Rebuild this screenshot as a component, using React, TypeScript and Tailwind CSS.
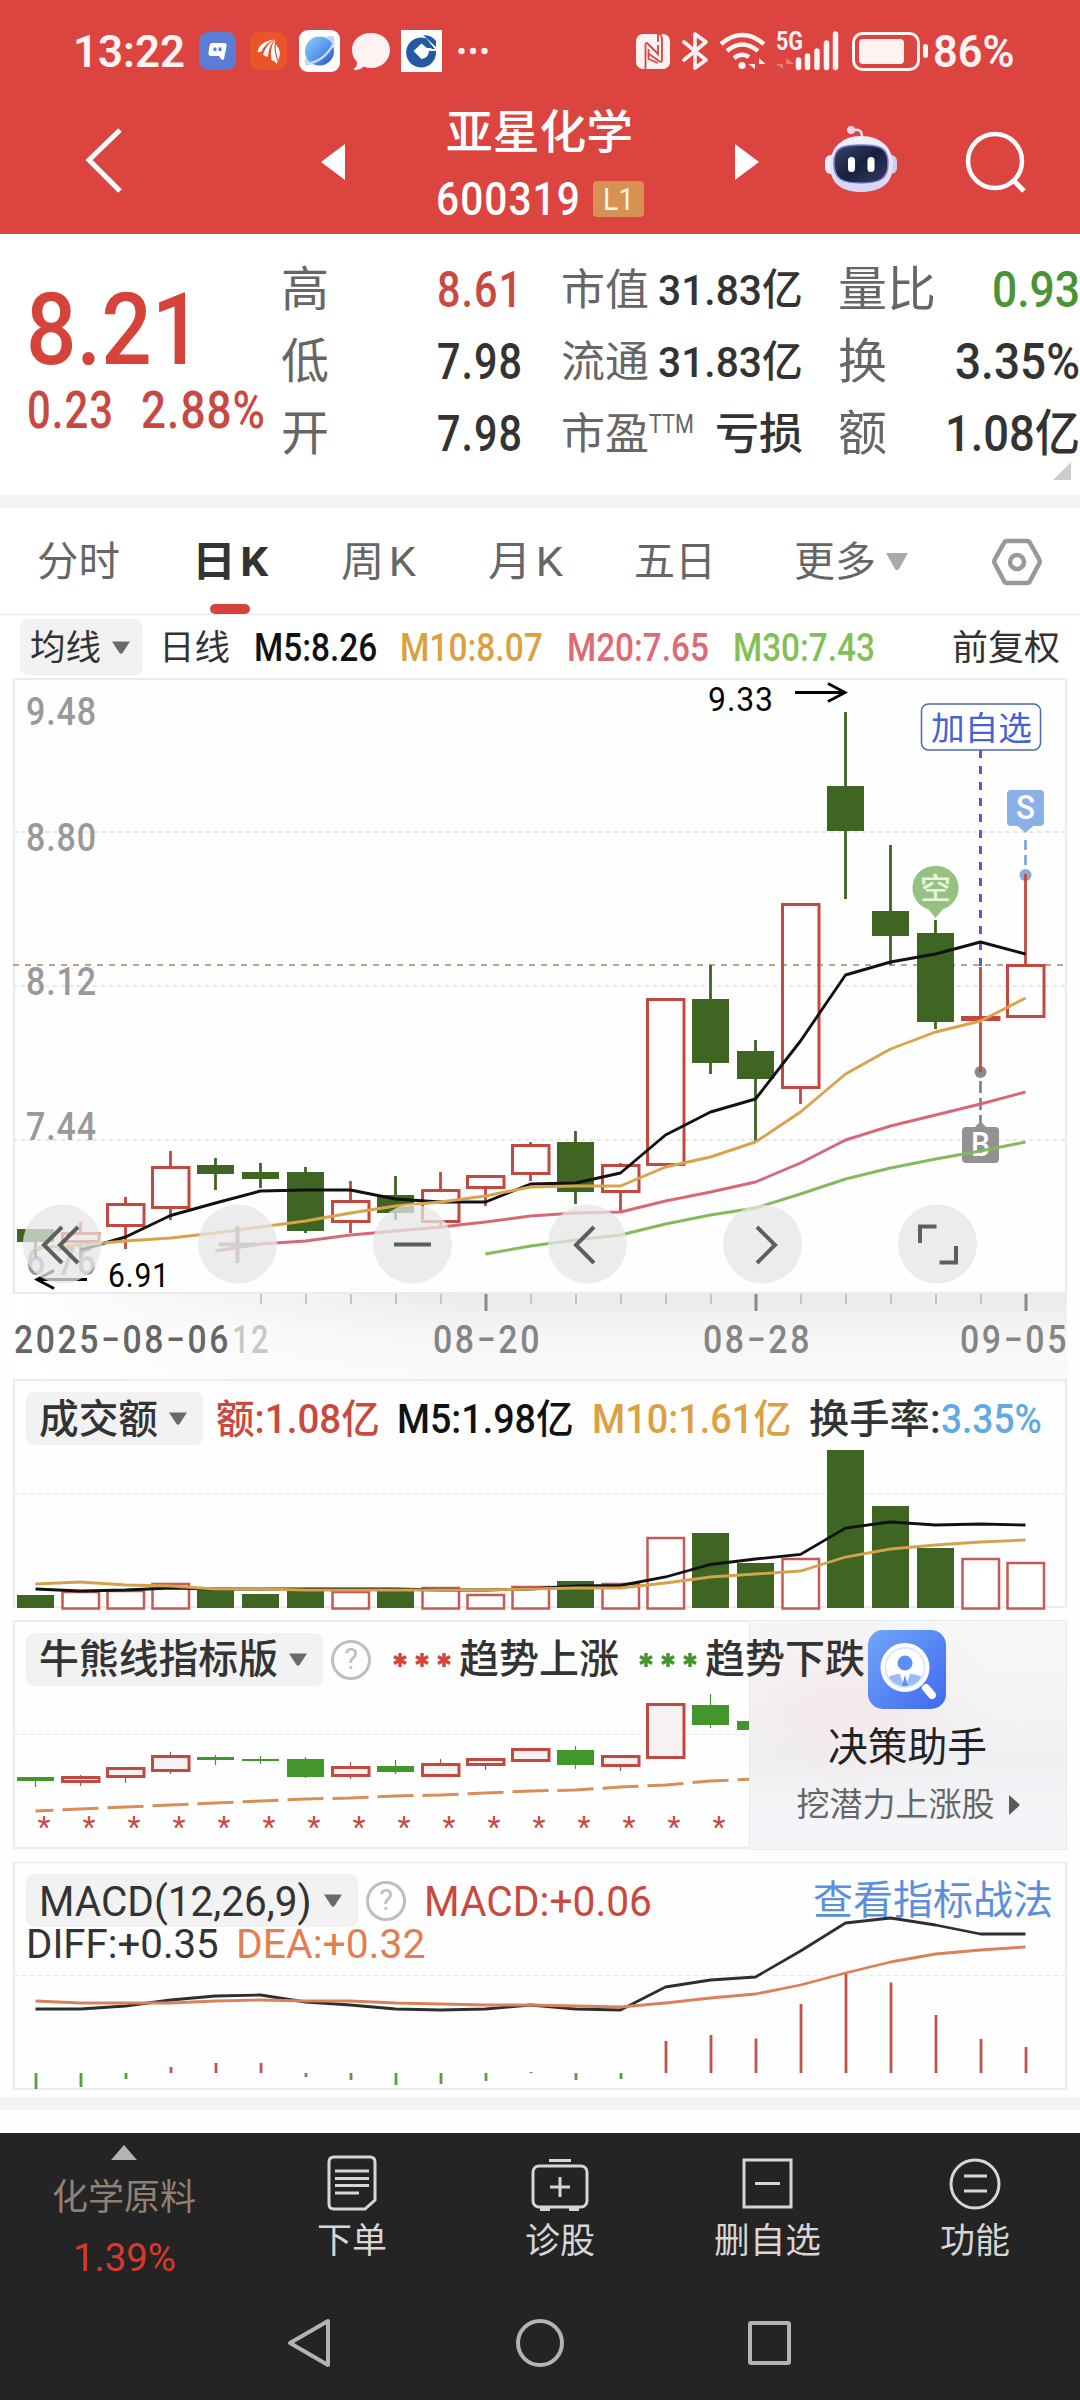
import { useLayoutEffect, useRef, type ReactNode } from "react";

const RED = "#c1493f";
const GREEN = "#3e6522";

// [body top, body bottom, high, low, rising]
type Candle = [number, number, number, number, boolean];

const candles: Candle[] = [
  [1229, 1242, 1229, 1258, false],
  [1232, 1243, 1222, 1258, true],
  [1203, 1227, 1197, 1249, true],
  [1166, 1209, 1151, 1220, true],
  [1165, 1174, 1158, 1190, false],
  [1172, 1179, 1163, 1188, false],
  [1172, 1231, 1167, 1233, false],
  [1200, 1223, 1181, 1233, true],
  [1195, 1213, 1176, 1220, false],
  [1189, 1223, 1172, 1229, true],
  [1175, 1189, 1175, 1206, true],
  [1144, 1175, 1142, 1181, true],
  [1142, 1192, 1131, 1204, false],
  [1164, 1193, 1163, 1212, true],
  [998, 1166, 998, 1166, true],
  [999, 1063, 965, 1074, false],
  [1051, 1079, 1040, 1141, false],
  [903, 1089, 903, 1104, true],
  [786, 831, 712, 899, false],
  [911, 936, 845, 965, false],
  [933, 1022, 920, 1029, false],
  [1016, 1021, 967, 1072, true],
  [964, 1018, 874, 1018, true],
];

const trend: Candle[] = [
  [1777, 1781, 1777, 1787, false],
  [1776, 1783, 1775, 1786, true],
  [1767, 1778, 1767, 1783, true],
  [1755, 1772, 1752, 1774, true],
  [1757, 1760, 1755, 1765, false],
  [1759, 1761, 1756, 1764, false],
  [1759, 1777, 1757, 1778, false],
  [1766, 1777, 1762, 1779, true],
  [1766, 1772, 1760, 1774, false],
  [1763, 1777, 1759, 1777, true],
  [1758, 1766, 1758, 1770, true],
  [1748, 1762, 1748, 1762, true],
  [1750, 1765, 1746, 1769, false],
  [1755, 1767, 1755, 1771, true],
  [1703, 1759, 1703, 1759, true],
  [1705, 1725, 1694, 1728, false],
  [1721, 1730, 1721, 1730, false],
];

const ma5 = [1250, 1237, 1215.5, 1203, 1191, 1190, 1190, 1199, 1202, 1202, 1184, 1183, 1173, 1135, 1112, 1099, 1041, 975, 962, 954, 942, 954];
const ma10 = [1248, 1245, 1241, 1238, 1233, 1227, 1221, 1213, 1206, 1202, 1196, 1187, 1186, 1186, 1167, 1157, 1142, 1112, 1074, 1049, 1032, 1021, 998];
const ma20 = [1251, 1244, 1241, 1235, 1231, 1227, 1222, 1216, 1213, 1212, 1201, 1192, 1182, 1163, 1140, 1126, 1115, 1104, 1092];
const ma30 = [1254, 1246, 1240, 1235, 1224, 1215, 1208, 1194, 1179, 1168, 1159, 1151, 1142];

const volumes = [1595, 1591, 1590, 1583, 1590, 1594, 1590, 1591, 1590, 1587, 1594, 1586, 1581, 1583, 1537, 1533, 1563, 1558, 1450, 1506, 1548, 1558, 1562];
const vol5 = [1589, 1591, 1590, 1588, 1589, 1589, 1589, 1589, 1589, 1590, 1590, 1589, 1586, 1585.5, 1577, 1564.5, 1559, 1554.5, 1528, 1522, 1525, 1524, 1525];
const vol10 = [1584, 1582, 1585, 1586, 1589, 1589, 1590, 1590, 1590, 1590, 1590, 1589, 1588, 1588, 1583, 1577, 1574, 1571, 1557, 1549, 1545, 1542, 1540];

const bull = [1811, 1809, 1807, 1805, 1803, 1801, 1799, 1798, 1796, 1795, 1793, 1791, 1790, 1787, 1785, 1781, 1779];

const diff = [2009, 2009, 2006, 2000, 1996, 1995, 2002, 2005, 2009, 2010, 2009, 2005, 2009, 2010, 1987, 1980, 1977, 1951, 1923, 1918, 1925, 1934, 1934];
const dea = [2001, 2003, 2003, 2003, 2001, 2000, 2001, 2001, 2003, 2004, 2005, 2005, 2006, 2007, 2003, 1998, 1994, 1985, 1973, 1962, 1954, 1950, 1947];
const macd = [2089, 2087, 2079, 2067, 2063, 2063, 2077, 2080, 2085, 2084, 2081, 2072, 2080, 2079, 2041, 2035, 2038.5, 2004, 1974, 1982.5, 2015, 2039, 2047];

const cx = (i: number) => 35.5 + i * 45;

const line = (values: number[], from = 0) =>
  values.map((y, i) => `${cx(i + from)},${y}`).join(" ");

// Squeezes or stretches one line of text to a given width
function Fit({ w, className = "", children }: { w: number; className?: string; children: ReactNode }) {
  const ref = useRef<HTMLSpanElement>(null);

  useLayoutEffect(() => {
    const el = ref.current;
    if (el) el.style.transform = `scaleX(${w / el.offsetWidth})`;
  }, [w]);

  return (
    <span className={`block shrink-0 leading-none ${className}`} style={{ width: w }}>
      <span ref={ref} className="inline-block origin-left whitespace-nowrap">
        {children}
      </span>
    </span>
  );
}

function Label({ x, y, w, size, fill, weight = 500, gap = 0, children }: {
  x: number; y: number; w: number; size: number; fill: string; weight?: number; gap?: number; children: string;
}) {
  return (
    <text x={x} y={y} textLength={w} lengthAdjust="spacingAndGlyphs" fontSize={size} fill={fill} fontWeight={weight} letterSpacing={gap}>
      {children}
    </text>
  );
}

function Frame({ top, bottom }: { top: number; bottom: number }) {
  return <rect x="14" y={top + 1} width="1052" height={bottom - top - 2} fill="none" stroke="#ebebeb" strokeWidth="2" />;
}

function GridLine({ y, w = 2 }: { y: number; w?: number }) {
  return <line x1="13" x2="1066" y1={y} y2={y} stroke="#e6e6e6" strokeWidth={w} strokeDasharray="4 4" />;
}

function Candles({ data, green, wick, fill = "none" }: { data: Candle[]; green: string; wick: number; fill?: string }) {
  return (
    <>
      {data.map(([top, bottom, high, low, up], i) => {
        const x = cx(i);
        const color = up ? RED : green;
        return (
          <g key={i} stroke={color} strokeWidth={wick}>
            {high < top && <line x1={x} x2={x} y1={high} y2={top} />}
            {low > bottom && <line x1={x} x2={x} y1={bottom} y2={low} />}
            {up ? (
              <rect x={x - 18} y={top + 1.5} width="36.5" height={bottom - top - 3} fill={fill} strokeWidth="3" />
            ) : (
              <rect x={x - 18.5} y={top} width="37" height={bottom - top} fill={green} stroke="none" />
            )}
          </g>
        );
      })}
    </>
  );
}

function Caret({ className = "" }: { className?: string }) {
  return (
    <svg width="18" height="13" viewBox="0 0 18 13" className={`shrink-0 ${className}`}>
      <path d="M0 0.500H18L10.500 12Q9 13.500 7.500 12Z" fill="#6a6a6a" />
    </svg>
  );
}

function Help({ className = "" }: { className?: string }) {
  return (
    <span className={`flex size-[40px] shrink-0 items-center justify-center rounded-full border-[3px] border-[#bfbfbf] text-[29px] leading-none text-[#bfbfbf] ${className}`}>
      ?
    </span>
  );
}

function StatusBar() {
  return (
    <div className="flex h-[102px] items-center text-[45px] font-semibold text-[#fff2f2]">
      <Fit w={112} className="ml-[73px]">13:22</Fit>
      <svg width="37" height="38" viewBox="0 0 37 38" className="ml-[14px]">
        <rect width="37" height="38" rx="9" fill="#5b7dd6" />
        <path d="M13 11H25Q28 11 27.5 14L26 22Q25.500 24 25 27Q24 29 22 27L20 24H12Q9 24 9.500 20L10.500 14Q11 11 13 11Z" fill="#fff" />
        <path d="M16 15.500V19M21 15.500V19" stroke="#5b7dd6" strokeWidth="3" />
      </svg>
      <svg width="37" height="38" viewBox="0 0 37 38" className="ml-[14px]">
        <rect width="37" height="38" rx="9" fill="#eb5428" />
        <path d="M7.500 20Q9 10 23.500 7.500Q14 12.500 11 20ZM13 22.500Q16 13 24.500 7.500Q18.500 14.500 18 24.500Q15 25 13 22.500ZM21.500 28Q19.500 16 25 7.500Q25 12 28.500 16Q32 22 26.500 32Q25.500 29 21.500 28Z" fill="#fff" />
        <path d="M25.500 9Q24 19 28 29" stroke="#eb5428" fill="none" strokeWidth="1.200" />
      </svg>
      <svg width="41" height="42" viewBox="0 0 41 42" className="ml-[12px]">
        <defs>
          <linearGradient id="globe" x1="0" y1="0" x2="1" y2="1">
            <stop offset="0" stopColor="#8bd2f5" />
            <stop offset="0.5" stopColor="#5b9cf0" />
            <stop offset="1" stopColor="#1f50cc" />
          </linearGradient>
        </defs>
        <rect width="41" height="42" rx="9" fill="#fff" />
        <path d="M6 35Q4 27 14 18L27 7Q38 3 35 12Q30 24 17 32Q9 37 6 35Z" fill="#c6d3f2" />
        <circle cx="20.500" cy="21" r="14.500" fill="url(#globe)" />
        <path d="M7 34Q25 32 35 13" fill="none" stroke="#c8dafa" strokeWidth="2.500" />
      </svg>
      <svg width="40" height="39" viewBox="0 0 40 39" className="ml-[11px]">
        <path d="M20 1C31 1 39 8 39 18S31 36 20 36Q16 36 13 34.500Q9 38 3 38Q2 37 5 35Q6 33 6 30Q1 25 1 18C1 8 9 1 20 1Z" fill="#fff2f2" />
      </svg>
      <svg width="41" height="42" viewBox="0 0 41 42" className="ml-[10px]">
        <rect width="41" height="42" fill="#fff" />
        <path d="M24 8A15 15 0 1 0 35 21H28A8 8 0 0 1 20.500 29L12.500 21L20.500 13.500L26 18H30Z" fill="#2559a3" />
        <path d="M22 5Q31 5 35 11V17ZM21 10L31 19H34L25 8Z" fill="#2559a3" />
        <path d="M20.500 14.500L27 21.500L20.500 28.500L13.500 21.500Z" fill="#fff" />
      </svg>
      <svg width="30" height="8" viewBox="0 0 30 8" className="ml-[16px]" fill="#fff2f2">
        <circle cx="3.500" cy="4" r="3.200" />
        <circle cx="15" cy="4" r="3.200" />
        <circle cx="26.500" cy="4" r="3.200" />
      </svg>

      <svg width="34" height="35" viewBox="0 0 34 35" className="ml-[148px]">
        <rect width="34" height="35" rx="7" fill="#fff2f2" />
        <path d="M9.500 35V11Q9.500 7.500 12 10L22 20V11M12.500 15V25L22 29" fill="none" stroke="#dc443f" strokeWidth="1.800" />
        <path d="M22 8V0H24.500L26 4V26Q26 29 23 27L13 20" fill="none" stroke="#dc443f" strokeWidth="1.800" />
      </svg>
      <svg width="26" height="38" viewBox="0 0 26 38" className="ml-[12px]" fill="none" stroke="#fff2f2" strokeWidth="3.600" strokeLinejoin="round" strokeLinecap="round">
        <path d="M2 10L24 28L13 36V2L24 10L2 28" />
      </svg>
      <svg width="48" height="39" viewBox="0 0 48 39" className="ml-[11px]" fill="none" stroke="#fff2f2" strokeWidth="4.500">
        <path d="M2 12Q23 -6 45 12M8 19Q23 6 39 19M15 26Q23 20 30 25" />
        <circle cx="23" cy="33.500" r="3.600" fill="#fff2f2" stroke="none" />
        <path d="M36 27V37L29.500 32H36ZM40 37V26L46.500 32H40Z" fill="#fff2f2" stroke="none" />
      </svg>
      <svg width="64" height="56" viewBox="0 -8 64 56" className="ml-[9px]">
        <text x="0" y="19" textLength="27" lengthAdjust="spacingAndGlyphs" fontSize="25" fontWeight="700" fill="#fff2f2">5G</text>
        <path d="M7 27V38L0 33H7ZM10 38V27L18 33H10Z" fill="#ee7a76" />
        <path d="M22.500 29V36.500M31.500 25V36.500M41 20V36.500M50.500 12V36.500M59.500 3V36.500" stroke="#fff2f2" strokeWidth="5.500" strokeLinecap="round" />
      </svg>
      <svg width="78" height="39" viewBox="0 0 78 39" className="ml-[12px]">
        <rect x="1.500" y="1.500" width="65" height="36" rx="9" fill="none" stroke="#fff2f2" strokeWidth="3" />
        <rect x="7" y="7" width="45" height="25" rx="4" fill="#fff2f2" />
        <rect x="71" y="12" width="5" height="14" rx="2.500" fill="#fff2f2" />
      </svg>
      <Fit w={82} className="ml-[3px]">86%</Fit>
    </div>
  );
}

function Robot() {
  return (
    <svg width="74" height="68" viewBox="825 125 74 68" className="mt-[23px] ml-[66px]">
      <defs>
        <linearGradient id="head" x1="0" y1="0" x2="0" y2="1">
          <stop offset="0" stopColor="#f6f0fb" />
          <stop offset="1" stopColor="#d3d6f3" />
        </linearGradient>
        <linearGradient id="visor" x1="0" y1="0" x2="1" y2="1">
          <stop offset="0" stopColor="#3a4766" />
          <stop offset="0.500" stopColor="#18203f" />
          <stop offset="1" stopColor="#363c63" />
        </linearGradient>
      </defs>
      <path d="M852 131Q862 127 862 137" fill="none" stroke="#f6dff0" strokeWidth="2.500" />
      <circle cx="851" cy="130" r="4" fill="#e9d5f0" />
      <rect x="825" y="155" width="12" height="19" rx="6" fill="#f3eefc" />
      <rect x="885" y="155" width="12" height="19" rx="6" fill="#c9cff2" />
      <path d="M861 136C882 136 893 149 893 165C893 183 881 192 861 192C841 192 830 183 830 165C830 149 841 136 861 136Z" fill="url(#head)" />
      <path d="M861 145C879 145 888 147 888 163C888 179 880 183 861 183C842 183 834 179 834 163C834 147 843 145 861 145Z" fill="url(#visor)" stroke="#7d77d8" strokeWidth="1.500" />
      <rect x="848" y="157" width="7" height="15" rx="3.500" fill="#fff" />
      <rect x="867.500" y="157" width="7" height="15" rx="3.500" fill="#fff" />
    </svg>
  );
}

function Header() {
  return (
    <header className="h-[234px] bg-[#dc443f] text-white">
      <StatusBar />
      <div className="flex items-start">
        <svg width="40" height="68" viewBox="0 0 40 68" className="mt-[24px] ml-[84px]">
          <path d="M36 4L5 34L36 65" fill="none" stroke="#fff" strokeWidth="5" />
        </svg>
        <svg width="24" height="36" viewBox="0 0 24 36" className="mt-[42px] ml-[197px]">
          <path d="M24 0V36L0 18Z" fill="#fff" />
        </svg>
        <div className="ml-[91px] flex w-[209px] flex-col">
          <Fit w={187} className="mt-[7px] ml-[10px] text-[46px] font-medium">亚星化学</Fit>
          <div className="mt-[21px] flex items-center">
            <Fit w={145} className="text-[46px] font-medium tracking-wide">600319</Fit>
            <span className="ml-[12px] flex h-[36px] w-[51px] items-center justify-center rounded bg-[#d79155] text-[32px] leading-none text-[#fff6e6]">
              <Fit w={31}>L1</Fit>
            </span>
          </div>
        </div>
        <svg width="24" height="36" viewBox="0 0 24 36" className="mt-[42px] ml-[90px]">
          <path d="M0 0V36L24 18Z" fill="#fff" />
        </svg>
        <Robot />
        <svg width="64" height="64" viewBox="0 0 64 64" className="mt-[29px] ml-[66px]" fill="none" stroke="#fff" strokeWidth="4.500">
          <circle cx="30" cy="30" r="27" />
          <path d="M48 49L59 60" strokeWidth="5" />
        </svg>
      </div>
    </header>
  );
}

const quoteRows = [
  { a: "高", av: "8.61", aw: 86, b: "市值", bv: "31.83亿", bw: 145, c: "量比", cv: "0.93", cw: 88 },
  { a: "低", av: "7.98", aw: 86, b: "流通", bv: "31.83亿", bw: 145, c: "换", cv: "3.35%", cw: 125 },
  { a: "开", av: "7.98", aw: 86, b: "市盈", bv: "亏损", bw: 88, c: "额", cv: "1.08亿", cw: 135 },
];

function Quote() {
  return (
    <section className="flex h-[261px] bg-white text-[#333]">
      <div className="w-[281px] shrink-0 pt-[46px] text-[#d5433a]">
        <Fit w={176} className="ml-[26px] text-[100px] font-medium">8.21</Fit>
        <div className="mt-[5px] flex text-[51px] text-[#c94840]">
          <Fit w={87} className="ml-[27px] font-medium tracking-wide">0.23</Fit>
          <Fit w={125} className="ml-[27px] font-medium tracking-wide">2.88%</Fit>
        </div>
      </div>
      <div className="relative grow pt-[20px]">
        {quoteRows.map((r, i) => (
          <div key={r.a} className="flex h-[72px] items-center">
            <Fit w={48} className="text-[48px] text-[#666]">{r.a}</Fit>
            <div className="flex w-[194px] justify-end text-[50px] font-medium tracking-wide">
              <Fit w={r.aw} className={i === 0 ? "text-[#c94840]" : ""}>{r.av}</Fit>
            </div>
            <Fit w={88} className="ml-[38px] text-[43px] text-[#666]">{r.b}</Fit>
            {i === 2 && <Fit w={45} className="-mt-[20px] text-[25px] text-[#666]">TTM</Fit>}
            <div className={i === 2 ? "flex w-[109px] justify-end text-[43px] font-medium" : "flex w-[154px] justify-end text-[43px] font-medium"}>
              <Fit w={r.bw}>{r.bv}</Fit>
            </div>
            <Fit w={r.c.length * 49} className="ml-[35px] text-[48px] text-[#666]">{r.c}</Fit>
            <div className="flex grow justify-end text-[50px] font-medium">
              <Fit w={r.cw} className={i === 0 ? "text-[#4a9434]" : ""}>{r.cv}</Fit>
            </div>
          </div>
        ))}
        <svg width="18" height="18" viewBox="0 0 18 18" className="absolute right-[9px] bottom-[15px]">
          <path d="M18 0V18H0Z" fill="#ccc" />
        </svg>
      </div>
    </section>
  );
}

function Tabs() {
  return (
    <nav className="flex h-[107px] items-start border-b border-[#e8e8e8] bg-white pt-[34px] text-[41px] text-[#666]">
      <Fit w={83} className="ml-[37px]">分时</Fit>
      <div className="ml-[72px] flex w-[76px] flex-col items-center font-bold text-[#333]">
        <Fit w={76}>日&#8202;K</Fit>
        <span className="mt-[21px] h-[10px] w-[40px] rounded-full bg-[#d5433a]" />
      </div>
      <Fit w={75} className="ml-[73px]">周&#8202;K</Fit>
      <Fit w={75} className="ml-[72px]">月&#8202;K</Fit>
      <Fit w={82} className="ml-[71px]">五日</Fit>
      <Fit w={82} className="ml-[78px]">更多</Fit>
      <svg width="22" height="18" viewBox="0 0 22 18" className="mt-[11px] ml-[10px]">
        <path d="M0 0H22L13 16Q11 18.500 9 16Z" fill="#aaa" />
      </svg>
      <svg width="50" height="48" viewBox="0 0 50 48" className="-mt-[4px] ml-[84px]" fill="none" stroke="#999" strokeWidth="4.500">
        <path d="M15 3H35Q37 3 38 5L47 21Q48.500 24 47 26L38 43Q37 45 35 45H15Q13 45 12 43L3 26Q1.500 24 3 21L12 5Q13 3 15 3Z" />
        <circle cx="25" cy="24" r="7" />
      </svg>
    </nav>
  );
}

function AverageBar() {
  return (
    <div className="flex h-[63px] items-center bg-white pt-[1px] text-[38px] font-medium">
      <div className="ml-[20px] flex h-[56px] w-[123px] items-center rounded-lg bg-[#f2f2f2] text-[#333]">
        <Fit w={71} className="mt-[2px] ml-[10px] text-[35px] font-normal">均线</Fit>
        <Caret className="ml-[11px]" />
      </div>
      <Fit w={71} className="mt-[3px] ml-[16px] text-[35px] font-normal text-[#333]">日线</Fit>
      <Fit w={123} className="mt-[2px] ml-[24px] text-[#111]">M5:8.26</Fit>
      <Fit w={143} className="mt-[2px] ml-[23px] text-[#dba040]">M10:8.07</Fit>
      <Fit w={142} className="mt-[2px] ml-[24px] text-[#de6a74]">M20:7.65</Fit>
      <Fit w={142} className="mt-[2px] ml-[24px] text-[#82bf57]">M30:7.43</Fit>
      <Fit w={108} className="mt-[3px] ml-[77px] text-[35px] font-normal text-[#333]">前复权</Fit>
    </div>
  );
}

function PriceChart() {
  return (
    <svg width="1080" height="701" viewBox="0 678 1080 701" className="block">
      <defs>
        <linearGradient id="axis" x1="0" y1="0" x2="0" y2="1">
          <stop offset="0" stopColor="#ebebeb" />
          <stop offset="0.500" stopColor="#f6f6f6" />
          <stop offset="1" stopColor="#fafafa" />
        </linearGradient>
        <linearGradient id="fade">
          <stop offset="0" stopColor="#fff" />
          <stop offset="0.350" stopColor="#fff" stopOpacity="0.600" />
          <stop offset="1" stopColor="#fff" stopOpacity="0" />
        </linearGradient>
      </defs>
      <rect x="13" y="1294" width="1054" height="85" fill="url(#axis)" />
      <rect x="12" y="1294" width="460" height="85" fill="url(#fade)" />
      <Frame top={678} bottom={1294} />
      <GridLine y={832} />
      <GridLine y={986} />
      <GridLine y={1140} />
      <line x1="13" x2="1066" y1="965" y2="965" stroke="#bba683" strokeWidth="2" strokeDasharray="6 6" />

      <Label x={26} y={725} w={71} size={39} gap={1} fill="#999">9.48</Label>
      <Label x={26} y={851} w={71} size={39} gap={1} fill="#999">8.80</Label>
      <Label x={26} y={995} w={71} size={39} gap={1} fill="#999">8.12</Label>
      <Label x={26} y={1140} w={71} size={39} gap={1} fill="#999">7.44</Label>
      <Label x={26} y={1275} w={71} size={39} gap={1} fill="#999">6.76</Label>

      {/* trade marks under the candles */}
      <line x1="980.500" x2="980.500" y1="750" y2="967" stroke="#4a66d4" strokeWidth="3" strokeDasharray="8 8" />
      <path d="M1025.500 840V868" stroke="#6f9fdd" strokeWidth="2.500" strokeDasharray="10 5" />
      <circle cx="1025.500" cy="875" r="6" fill="#86a9e0" />
      <circle cx="980.500" cy="1072" r="6" fill="#8b8b8b" />
      <path d="M980.500 1081V1122" stroke="#777" strokeWidth="2.500" strokeDasharray="12 5" />
      <path d="M966 1127H975L980.500 1121L986 1127H995Q999 1127 999 1131V1159Q999 1163 995 1163H966Q962 1163 962 1159V1131Q962 1127 966 1127Z" fill="#929292" />
      <Label x={971} y={1156} w={19} size={33} fill="#fff">B</Label>

      <Candles data={candles} green={GREEN} wick={2.8} />

      <g fill="none" strokeWidth="2.900" strokeLinejoin="round">
        <polyline points={line(ma5, 1)} stroke="#111" />
        <polyline points={line(ma10)} stroke="#d9a24b" />
        <polyline points={line(ma20, 4)} stroke="#d76976" />
        <polyline points={line(ma30, 10)} stroke="#82bb5e" />
      </g>

      <path d="M1011 790H1040Q1044 790 1044 794V822Q1044 826 1040 826H1033L1025.500 833L1018 826H1011Q1007 826 1007 822V794Q1007 790 1011 790Z" fill="#8ab0ea" />
      <Label x={1016} y={819} w={19} size={33} fill="#fff">S</Label>
      <path d="M935.500 866A22 22 0 0 1 943 909L935.500 918L928 909A22 22 0 0 1 935.500 866Z" fill="#95c281" />
      <Label x={920} y={899} w={31} size={30} fill="#e6f7de">空</Label>
      <rect x="921.500" y="704" width="119" height="46" rx="7" fill="#fff" stroke="#4c66bd" strokeWidth="1.500" />
      <Label x={931} y={740} w={101} size={33} fill="#4762d2" weight={400}>加自选</Label>

      <Label x={708} y={711} w={66} size={34} fill="#000" weight={400} gap={1}>9.33</Label>
      <path d="M795 692.500H845M828 683.500L845 692.500L828 701.500" fill="none" stroke="#000" strokeWidth="2.800" />
      <Label x={108} y={1287} w={62} size={34} fill="#000" weight={400} gap={1}>6.91</Label>
      <path d="M87 1279.500H37M54 1270.500L37 1279.500L54 1288.500" fill="none" stroke="#000" strokeWidth="2.800" />

      <g fill="#e6e6e6" fillOpacity="0.750">
        {[62.3, 237.6, 412.4, 587.5, 762.5, 937.5].map((x) => (
          <circle key={x} cx={x} cy="1244" r="39.500" />
        ))}
      </g>
      <g fill="none" stroke="#5e5e5e" strokeWidth="4">
        <path d="M62 1227L44 1245L62 1263M78 1227L60 1245L78 1263" />
        <path d="M219 1244.500H256M237.500 1226V1263" stroke="#cfcfcf" />
        <path d="M394 1244.500H431" />
        <path d="M594 1227L576 1245L594 1263" />
        <path d="M757 1227L775 1245L757 1263" />
        <path d="M920 1243V1226.500H936.500M956 1246V1262.500H939.500" />
      </g>

      <g stroke="#c4c4c4" strokeWidth="2">
        {Array.from({ length: 18 }, (_, i) => i + 5).map((i) =>
          i === 10 || i === 16 || i === 22 ? (
            <line key={i} x1={cx(i) + 0.5} x2={cx(i) + 0.5} y1="1294" y2="1311" stroke="#8a8a8a" strokeWidth="3" />
          ) : (
            <line key={i} x1={cx(i) + 0.5} x2={cx(i) + 0.5} y1="1294" y2="1304" />
          ),
        )}
      </g>
      <Label x={14} y={1353} w={217} size={39} gap={3} fill="#666">2025−08−06</Label>
      <Label x={232} y={1353} w={38} size={39} gap={2} fill="#c8c8c8">12</Label>
      <Label x={433} y={1353} w={109} size={39} gap={3} fill="#858585">08−20</Label>
      <Label x={703} y={1353} w={109} size={39} gap={3} fill="#858585">08−28</Label>
      <Label x={960} y={1353} w={109} size={39} gap={3} fill="#858585">09−05</Label>
    </svg>
  );
}

function VolumePanel() {
  return (
    <section className="relative h-[241px]">
      <svg width="1080" height="241" viewBox="0 1379 1080 241" className="block">
        <rect x="13" y="1379" width="1054" height="7" fill="#fbfbfb" />
        <Frame top={1379} bottom={1608} />
        <GridLine y={1493.5} w={1} />
        {volumes.map((y, i) =>
          candles[i][4] ? (
            <rect key={i} x={cx(i) - 18} y={y + 1} width="36.500" height={1607.5 - y} fill="#fff" stroke="#c55a54" strokeWidth="2.500" />
          ) : (
            <rect key={i} x={cx(i) - 18.5} y={y} width="37" height={1608 - y} fill={GREEN} />
          ),
        )}
        <polyline points={line(vol5)} fill="none" stroke="#111" strokeWidth="2.800" />
        <polyline points={line(vol10)} fill="none" stroke="#d4a24c" strokeWidth="2.800" />
      </svg>
      <div className="absolute inset-x-0 top-[13px] flex h-[53px] items-center text-[40px] font-medium">
        <div className="ml-[26px] flex h-[53px] w-[177px] items-center rounded-lg bg-[#f2f2f2] text-[#333]">
          <Fit w={119} className="mt-[2px] ml-[13px]">成交额</Fit>
          <Caret className="ml-[11px]" />
        </div>
        <Fit w={164} className="mt-[2px] ml-[13px] text-[#c94840]">额:1.08亿</Fit>
        <Fit w={177} className="mt-[2px] ml-[17px] text-[#111]">M5:1.98亿</Fit>
        <Fit w={199} className="mt-[2px] ml-[18px] text-[#dba040]">M10:1.61亿</Fit>
        <Fit w={132} className="mt-[2px] ml-[18px] text-[#333]">换手率:</Fit>
        <Fit w={101} className="mt-[2px] text-[#62a8e2]">3.35%</Fit>
      </div>
    </section>
  );
}

function Stars({ className }: { className: string }) {
  return (
    <svg width="58" height="16" viewBox="0 0 58 16" className={`shrink-0 ${className}`} fill="none" stroke="currentColor" strokeWidth="3.400">
      {[7, 29, 51].map((x) => (
        <path key={x} d={`M${x} 1V15M${x - 6} 4.500L${x + 6} 11.500M${x - 6} 11.500L${x + 6} 4.500`} />
      ))}
    </svg>
  );
}

function TrendPanel() {
  return (
    <section className="relative h-[242px]">
      <svg width="1080" height="242" viewBox="0 1620 1080 242" className="block">
        <Frame top={1620} bottom={1849} />
        <GridLine y={1734.5} w={1} />
        <Candles data={trend} green="#43962c" wick={1.2} fill="#f6f2f2" />
        {bull.map((y, i) => {
          const next = bull[i + 1] ?? y - 2;
          const prev = bull[i - 1] ?? y;
          return (
            <polyline
              key={i}
              points={`${i === 0 ? cx(i) : cx(i) - 18},${y + (prev - y) * 0.4} ${cx(i)},${y} ${cx(i) + 18},${y + (next - y) * 0.4}`}
              fill="none"
              stroke="#d68f58"
              strokeWidth="3"
            />
          );
        })}
        {Array.from({ length: 16 }, (_, i) => (
          <text key={i} x={44 + i * 45} y="1837" textAnchor="middle" fontSize="30" fill="#c94840">*</text>
        ))}
      </svg>

      <div className="absolute top-0 right-[13px] h-[230px] w-[318px] border border-[#ececee] bg-linear-to-b from-[#f6f6f7] from-20% via-[#eef0f2] via-60% to-[#f5f4f8] to-85%">
        <div className="flex h-full flex-col items-center bg-[radial-gradient(ellipse_at_30%_38%,#f4e9ec_0%,transparent_50%)] pt-[9px]">
          <svg width="78" height="79" viewBox="0 0 78 79" className="-ml-[2px]">
            <defs>
              <linearGradient id="helper" x1="0" y1="0" x2="1" y2="1">
                <stop offset="0" stopColor="#71a7f8" />
                <stop offset="1" stopColor="#3f68f0" />
              </linearGradient>
              <clipPath id="lens">
                <circle cx="37" cy="37.500" r="19" />
              </clipPath>
            </defs>
            <rect width="78" height="79" rx="15" fill="url(#helper)" />
            <circle cx="37" cy="37.500" r="22.500" fill="#d9e5fb" stroke="#fff" strokeWidth="4" />
            <g clipPath="url(#lens)">
              <circle cx="37" cy="37.500" r="19" fill="#fff" />
              <path d="M18 60V49Q24 44 32 44L36 56L37 48L38 56L42 44Q51 44 56 49V60Z" fill="#9dbdf7" />
              <circle cx="37" cy="33" r="7.500" fill="#5a8ff5" />
              <path d="M37 45L40 56H34Z" fill="#5a8ff5" />
            </g>
            <path d="M58 58L64 65" stroke="#fff" strokeWidth="8" strokeLinecap="round" />
          </svg>
          <Fit w={159} className="mt-[19px] -ml-[2px] text-[40px] text-[#222]">决策助手</Fit>
          <div className="mt-[20px] flex items-center">
            <Fit w={198} className="text-[33px] text-[#666]">挖潜力上涨股</Fit>
            <svg width="12" height="20" viewBox="0 0 12 20" className="ml-[13px]">
              <path d="M1 0L11 9Q12 10 11 11L1 20Z" fill="#5a5a5a" />
            </svg>
          </div>
        </div>
      </div>

      <div className="absolute top-[13px] left-[26px] flex h-[53px] items-center text-[40px] text-[#333]">
        <div className="flex h-[53px] w-[297px] items-center rounded-lg bg-[#f2f2f2] font-medium">
          <Fit w={239} className="mt-[1px] ml-[13px]">牛熊线指标版</Fit>
          <Caret className="ml-[11px]" />
        </div>
        <Help className="ml-[8px]" />
        <Stars className="ml-[22px] text-[#d5433a]" />
        <Fit w={160} className="ml-[8px] font-medium">趋势上涨</Fit>
        <Stars className="ml-[20px] text-[#43962c]" />
        <Fit w={160} className="ml-[8px] font-medium">趋势下跌</Fit>
      </div>
    </section>
  );
}

function MacdPanel() {
  return (
    <section className="relative h-[235px]">
      <svg width="1080" height="235" viewBox="0 1862 1080 235" className="block">
        <Frame top={1861} bottom={2090} />
        <GridLine y={1975.5} w={1} />
        {macd.map((y, i) => (
          <line key={i} x1={cx(i) + 0.5} x2={cx(i) + 0.5} y1="2073" y2={y} stroke={y > 2073 ? "#5a9a48" : "#c1544e"} strokeWidth="2.800" />
        ))}
      </svg>
      <div className="absolute inset-x-0 top-[12px] text-[42px]">
        <div className="flex h-[53px] items-center">
          <div className="ml-[26px] flex h-[53px] w-[332px] items-center rounded-lg bg-[#f2f2f2] text-[#333]">
            <Fit w={273} className="mt-[2px] ml-[13px]">MACD(12,26,9)</Fit>
            <Caret className="ml-[12px]" />
          </div>
          <Help className="ml-[8px]" />
          <Fit w={228} className="mt-[2px] ml-[18px] text-[#c94840]">MACD:+0.06</Fit>
          <Fit w={240} className="mt-[1px] ml-[161px] text-[40px] text-[#5b8fdd]">查看指标战法</Fit>
        </div>
        <div className="-mt-[2px] flex text-[40px]">
          <Fit w={193} className="ml-[26px] text-[#333]">DIFF:+0.35</Fit>
          <Fit w={189} className="ml-[17px] text-[#e07f50]">DEA:+0.32</Fit>
        </div>
      </div>
      <svg width="1080" height="235" viewBox="0 1862 1080 235" className="absolute inset-0" fill="none" strokeWidth="2.800" strokeLinejoin="round">
        <polyline points={line(diff)} stroke="#2e2e2e" />
        <polyline points={line(dea)} stroke="#d9815a" />
      </svg>
    </section>
  );
}

function Action({ label, w, className, children }: { label: string; w: number; className: string; children: ReactNode }) {
  return (
    <div className={`flex flex-col items-center ${className}`}>
      <svg width="60" height="58" viewBox="0 0 60 58" fill="none" stroke="#d6d6d6" strokeWidth="3">
        {children}
      </svg>
      <Fit w={w} className="mt-[12px] text-[35px] text-[#d6d6d6]">{label}</Fit>
    </div>
  );
}

function BottomBar() {
  return (
    <footer className="h-[267px] bg-[#242424]">
      <div className="flex h-[162px] items-start">
        <div className="ml-[52px] flex w-[144px] flex-col items-center pt-[12px]">
          <svg width="26" height="15" viewBox="0 0 26 15">
            <path d="M13 0L26 15H0Z" fill="#b3b3b3" />
          </svg>
          <Fit w={144} className="mt-[20px] text-[36px] text-[#8f8172]">化学原料</Fit>
          <Fit w={103} className="mt-[23px] text-[38px] text-[#d8392e]">1.39%</Fit>
        </div>
        <Action label="下单" w={70} className="ml-[121px] mt-[21px]">
          <path d="M12 3H48Q53 3 53 8V46L43 55H12Q7 55 7 50V8Q7 3 12 3Z" />
          <path d="M13 17H47M13 24.500H47M13 31.500H47M13 39H37" />
        </Action>
        <Action label="诊股" w={70} className="ml-[138px] mt-[21px]">
          <rect x="3" y="12" width="54" height="41" rx="6" />
          <path d="M19 6.500H41M30 23V43M20 33H40M10 55.500H20M39 55.500H49" />
        </Action>
        <Action label="删自选" w={107} className="ml-[119px] mt-[21px]">
          <rect x="6" y="6" width="47" height="47" />
          <path d="M17 29.500H42" />
        </Action>
        <Action label="功能" w={70} className="ml-[119px] mt-[21px]">
          <circle cx="30" cy="30" r="24" />
          <path d="M19 22H42M19 37H42" />
        </Action>
      </div>
      <div className="flex pt-[22px]">
        <svg width="46" height="52" viewBox="0 0 46 52" className="ml-[286px]" fill="none" stroke="#b3b3b3" strokeWidth="4" strokeLinejoin="round">
          <path d="M42 4V48L4 26Z" />
        </svg>
        <svg width="52" height="52" viewBox="0 0 52 52" className="ml-[182px]" fill="none" stroke="#b3b3b3" strokeWidth="4">
          <circle cx="26" cy="26" r="22" />
        </svg>
        <svg width="46" height="52" viewBox="0 0 46 52" className="ml-[180px]" fill="none" stroke="#b3b3b3" strokeWidth="4">
          <rect x="4" y="6" width="39" height="40" rx="1" />
        </svg>
      </div>
    </footer>
  );
}

export default function App() {
  return (
    <div className="h-[2400px] w-[1080px] overflow-hidden bg-[#fefefe] font-[Roboto,'Noto_Sans_CJK_SC',sans-serif]">
      <Header />
      <Quote />
      <div className="h-[13px] bg-[#f4f4f4]" />
      <Tabs />
      <AverageBar />
      <PriceChart />
      <VolumePanel />
      <TrendPanel />
      <MacdPanel />
      <div className="h-[13px] bg-[#f4f4f4]" />
      <div className="h-[23px]" />
      <BottomBar />
    </div>
  );
}
